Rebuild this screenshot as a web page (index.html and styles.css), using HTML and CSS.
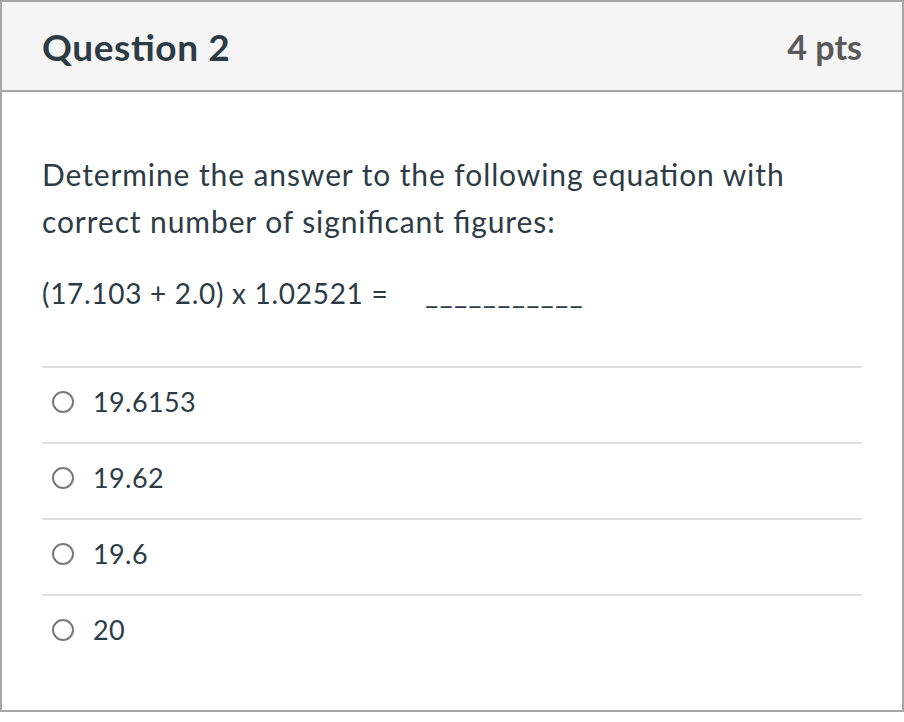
FILE: index.html
```html
<!DOCTYPE html>
<html lang="en">
<head>
<meta charset="utf-8">
<title>Question 2</title>
<link rel="stylesheet" href="styles.css">
</head>
<body>
<div class="question">
  <div class="question-header">
    <span class="question-title">Question 2</span>
    <span class="question-points">4 pts</span>
  </div>
  <div class="question-body">
    <div class="question-text">
      <p class="prompt">Determine the answer to the following equation with correct number of significant figures:</p>
      <p class="equation">(17.103 + 2.0) x 1.02521 = <span class="blank">___________</span></p>
    </div>
    <div class="answers">
      <label class="answer"><span class="radio"></span><span class="answer-text">19.6153</span></label>
      <label class="answer"><span class="radio"></span><span class="answer-text">19.62</span></label>
      <label class="answer"><span class="radio"></span><span class="answer-text">19.6</span></label>
      <label class="answer"><span class="radio"></span><span class="answer-text">20</span></label>
    </div>
  </div>
</div>
</body>
</html>
```

FILE: styles.css
```css
html, body {
  margin: 0;
  padding: 0;
  background: #ffffff;
}

body {
  font-family: Lato, "Noto Sans", sans-serif;
  color: #2d3b45;
  font-variant-ligatures: common-ligatures;
  font-feature-settings: "liga" 1;
}

.question {
  box-sizing: border-box;
  width: 904px;
  height: 712px;
  border: 2px solid #a6a6a6;
}

.question-header {
  height: 88px;
  background: #f5f5f5;
  border-bottom: 2px solid #a6a6a6;
  display: flex;
  align-items: center;
  justify-content: space-between;
  padding: 0 40px;
}

.question-title {
  font-size: 37px;
  font-weight: 700;
  letter-spacing: 0.6px;
  color: #2d3b45;
}

.question-points {
  font-size: 34px;
  font-weight: 700;
  color: #595959;
}

.question-body {
  padding: 0 40px;
}

.question-text {
  padding-top: 59px;
  padding-bottom: 49px;
}

.question-text p {
  margin: 0;
  line-height: 47px;
}

.prompt {
  font-size: 30px;
  letter-spacing: 0.9px;
}

.equation {
  margin-top: 25px !important;
  font-size: 28px;
  letter-spacing: 0.7px;
}

.blank {
  margin-left: 29px;
  letter-spacing: 1.6px;
}

.answers {
  display: flex;
  flex-direction: column;
}

.answer {
  height: 74px;
  border-top: 2px solid #dddddd;
  display: flex;
  align-items: center;
  padding-left: 10px;
  box-sizing: content-box;
}

.radio {
  box-sizing: border-box;
  width: 22px;
  height: 22px;
  border: 2px solid #7a7a7a;
  border-radius: 50%;
  margin-right: 19px;
  margin-top: -7px;
}

.answer-text {
  font-size: 27px;
  letter-spacing: 0.4px;
  line-height: 34px;
  margin-top: -7px;
}
```
